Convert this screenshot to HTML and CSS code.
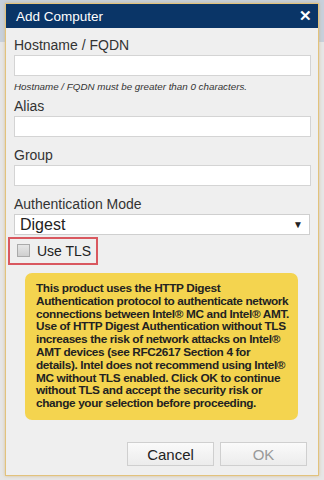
FILE: index.html
```html
<!DOCTYPE html>
<html lang="en">
<head>
    <meta charset="UTF-8">
    <meta name="viewport" content="width=device-width, initial-scale=1.0">
    <title>Add Computer</title>
    <link rel="stylesheet" href="styles.css">
</head>
<body>
    <div class="dialog">
        <div class="titlebar">
            <span>Add Computer</span>
            <span class="close">&#x2715;</span>
        </div>

        <div class="content">
            <label class="field_label">Hostname / FQDN</label>
            <input class="text_input" type="text">
            <div class="hint">Hostname / FQDN must be greater than 0 characters.</div>

            <label class="field_label">Alias</label>
            <input class="text_input" type="text">

            <label class="field_label spaced">Group</label>
            <input class="text_input" type="text">

            <label class="field_label spaced">Authentication Mode</label>
            <div class="select_box">
                <span>Digest</span>
                <span class="arrow">&#9660;</span>
            </div>

            <div class="tls_row">
                <span class="check"></span>
                <span>Use TLS</span>
            </div>

            <!-- line breaks kept as in the product dialog -->
            <div class="warning">
                This product uses the HTTP Digest<br>
                Authentication protocol to authenticate network<br>
                connections between Intel&reg; MC and Intel&reg; AMT.<br>
                Use of HTTP Digest Authentication without TLS<br>
                increases the risk of network attacks on Intel&reg;<br>
                AMT devices (see RFC2617 Section 4 for<br>
                details). Intel does not recommend using Intel&reg;<br>
                MC without TLS enabled. Click OK to continue<br>
                without TLS and accept the security risk or<br>
                change your selection before proceeding.
            </div>

            <div class="buttons">
                <button class="btn">Cancel</button>
                <button class="btn disabled">OK</button>
            </div>
        </div>
    </div>
</body>
</html>
```

FILE: styles.css
```css
body {
    margin: 0;
    height: 480px;
    background: linear-gradient(#c7d0db 0, #c7d0db 42px, #e6e6e6 42px);
    font-family: "Liberation Sans", Arial, sans-serif;
    overflow: hidden;
}
.dialog {
    margin: 3px 0 0 5px;
    width: 312px;
    height: 471px;
    border: 1px solid #e2c27c;
    background: #efefef;
    box-shadow: 0 0 3px rgba(200, 160, 80, 0.5);
    display: flex;
    flex-direction: column;
}
.titlebar {
    background: #0a3567;
    color: #fff;
    height: 24px;
    font-size: 13.5px;
    padding: 0 6px 0 10px;
    display: flex;
    justify-content: space-between;
    align-items: center;
}
.close {
    font-weight: bold;
    font-size: 15px;
}
.content {
    flex: 1;
    padding: 9px 7px 0 8px;
    display: flex;
    flex-direction: column;
}
.field_label {
    font-size: 14px;
    line-height: 16px;
    color: #333;
    margin-bottom: 2px;
}
.field_label.spaced {
    margin-top: 10px;
}
.text_input {
    height: 21px;
    box-sizing: border-box;
    border: 1px solid #d4d4d4;
    background: #fff;
    margin: 0;
    padding: 0;
}
.hint {
    font-size: 9.8px;
    font-style: italic;
    color: #333;
    line-height: 12px;
    margin: 5px 0 5px;
}
.select_box {
    height: 21px;
    width: 296px;
    box-sizing: border-box;
    border: 1px solid #cfcfcf;
    background: #fff;
    display: flex;
    justify-content: space-between;
    align-items: center;
    padding: 0 6px 0 5px;
    font-size: 16px;
    color: #222;
}
.arrow {
    font-size: 10px;
}
.tls_row {
    margin: 2px 0 0 -6px;
    width: 90px;
    height: 28px;
    box-sizing: border-box;
    border: 2px solid #d9585f;
    display: flex;
    align-items: center;
    gap: 7px;
    padding-left: 7px;
    font-size: 14px;
    color: #222;
}
.check {
    width: 11px;
    height: 11px;
    border: 1px solid #aaa;
    background: linear-gradient(#e6e6e6, #cfcfcf);
    margin-top: -2px;
}
.warning {
    margin: 8px 0 0 11px;
    width: 273px;
    height: 147px;
    box-sizing: border-box;
    background: #f4d44f;
    border-radius: 7px;
    padding: 9px 0 0 11px;
    font-size: 11.8px;
    letter-spacing: -0.35px;
    font-weight: bold;
    line-height: 12.8px;
    color: #222;
    white-space: nowrap;
}
.buttons {
    margin-top: 22px;
    display: flex;
    justify-content: flex-end;
    gap: 6px;
    padding-right: 4px;
}
.btn {
    width: 87px;
    height: 24px;
    border: 1px solid #cfcfcf;
    background: linear-gradient(#fafafa, #ececec);
    font-family: "Liberation Sans", Arial, sans-serif;
    font-size: 15px;
    color: #222;
    padding: 0;
}
.btn.disabled {
    color: #999;
}
```
